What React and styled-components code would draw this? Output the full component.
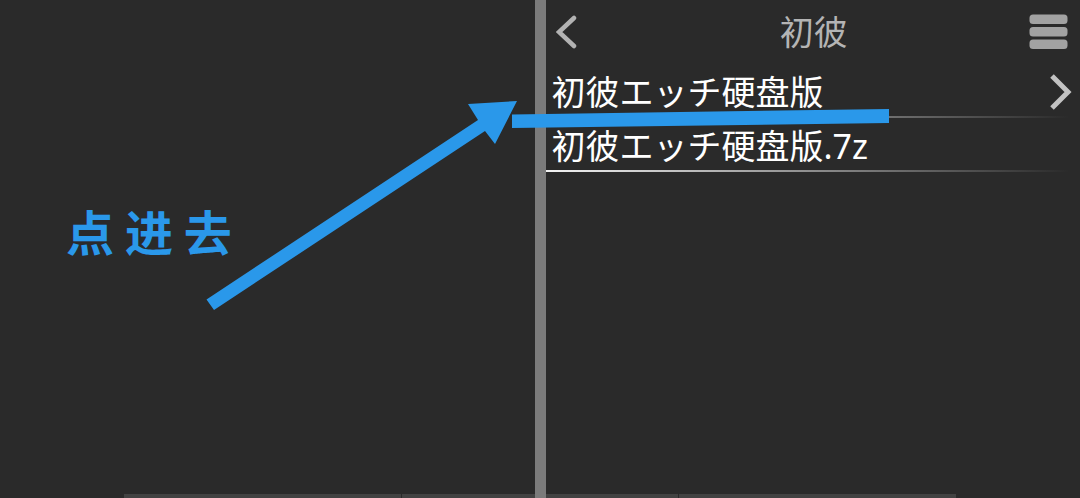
import React from "react";
import styled, { createGlobalStyle } from "styled-components";

const GlobalStyle = createGlobalStyle`
  * {
    box-sizing: border-box;
  }

  body {
    margin: 0;
    background: #2a2a2a;
    font-family: 'Noto Sans', 'Noto Sans CJK SC', sans-serif;
  }

  button {
    display: flex;
    align-items: center;
    margin: 0;
    padding: 0;
    border: none;
    background: none;
    color: inherit;
    font: inherit;
    cursor: pointer;
  }
`;

const Screen = styled.main`
  position: relative;
  display: grid;
  grid-template-columns: 1fr 11px 1fr;
  min-height: 100vh;
  overflow: hidden;
`;

const NotePane = styled.section`
  padding: 198px 0 0 66px;
`;

const Note = styled.p`
  margin: 0;
  color: #2a98ea;
  font-family: 'Noto Sans CJK SC', sans-serif;
  font-size: 48px;
  font-weight: 700;
  line-height: 64px;
`;

const Divider = styled.div`
  z-index: 1;
  background: #7b7b7b;
`;

const Header = styled.header`
  display: flex;
  align-items: center;
  justify-content: space-between;
  height: 64px;
  padding: 0 12px 0 10px;
`;

const HeaderButton = styled.button`
  justify-content: ${props => props.$end ? 'flex-end' : 'flex-start'};
  width: ${props => props.$end ? '40px' : '44px'};
  height: 40px;
`;

const Title = styled.h1`
  margin: 0;
  color: #b4b4b4;
  font-size: 34px;
  font-weight: 400;
  line-height: 64px;
`;

const FileList = styled.ul`
  margin: 0;
  padding: 0;
  list-style: none;
`;

const FileItem = styled.li`
  height: 54px;
  padding-bottom: 2px;
  background: linear-gradient(to right, #f4f4f4, #2a2a2a 98%) bottom / 100% 2px no-repeat;
`;

const FileButton = styled.button`
  && {
    justify-content: space-between;
    width: 100%;
    height: 52px;
    padding: 4px 8px 0 6px;
    color: #fff;
    font-size: 34px;
    line-height: 48px;
  }
`;

const BottomBar = styled.div`
  position: absolute;
  right: 0;
  bottom: 0;
  left: 0;
  display: grid;
  grid-template-columns: repeat(3, 1fr);
  gap: 1px;
  height: 4px;
  margin: 0 124px;
`;

const BottomTab = styled.div`
  background: #424242;
`;

const Marks = styled.svg`
  position: absolute;
  z-index: 2;
  top: 0;
  left: 0;
  width: 100%;
  fill: #2a98ea;
  pointer-events: none;
`;

const files = [
  { name: '初彼エッチ硬盘版', folder: true },
  { name: '初彼エッチ硬盘版.7z', folder: false },
];

const BackIcon = () => (
  <svg width="22" height="36" viewBox="0 0 22 36" fill="none" stroke="#b2b2b2" strokeWidth="4.500" strokeLinecap="round" aria-hidden="true">
    <path d="M18 4 3 18 18 32" strokeLinejoin="miter" />
  </svg>
);

const MenuIcon = () => (
  <svg width="39" height="36" viewBox="0 0 39 36" fill="#a2a2a2" aria-hidden="true">
    <rect x="0.5" y="0.5" width="38" height="9.5" rx="3.5" />
    <rect x="0.5" y="13" width="38" height="9.5" rx="3.5" />
    <rect x="0.5" y="25.5" width="38" height="9.5" rx="3.5" />
  </svg>
);

const ForwardIcon = () => (
  <svg width="22" height="36" viewBox="0 0 22 36" fill="none" stroke="#c2c2c2" strokeWidth="5" aria-hidden="true">
    <path d="M2 2 18 18 2 34" />
  </svg>
);

const App = () => {
  return (
    <Screen>
      <GlobalStyle />
      <NotePane>
        <Note>点 进 去</Note>
      </NotePane>
      <Divider />
      <section>
        <Header>
          <HeaderButton aria-label="返回"><BackIcon /></HeaderButton>
          <Title>初彼</Title>
          <HeaderButton $end aria-label="菜单"><MenuIcon /></HeaderButton>
        </Header>
        <FileList>
          {files.map(file => (
            <FileItem key={file.name}>
              <FileButton>
                {file.name}
                {file.folder && <ForwardIcon />}
              </FileButton>
            </FileItem>
          ))}
        </FileList>
      </section>
      <BottomBar>
        <BottomTab />
        <BottomTab />
        <BottomTab />
      </BottomBar>
      <Marks viewBox="0 0 1080 498" aria-hidden="true">
        <path d="M206.500 299.500 478 120 468 104 517 101 495 144 485 131 214 310Z" />
        <path d="M512 114.500 889 109 889 123 512 128Z" />
      </Marks>
    </Screen>
  );
}

export default App;
